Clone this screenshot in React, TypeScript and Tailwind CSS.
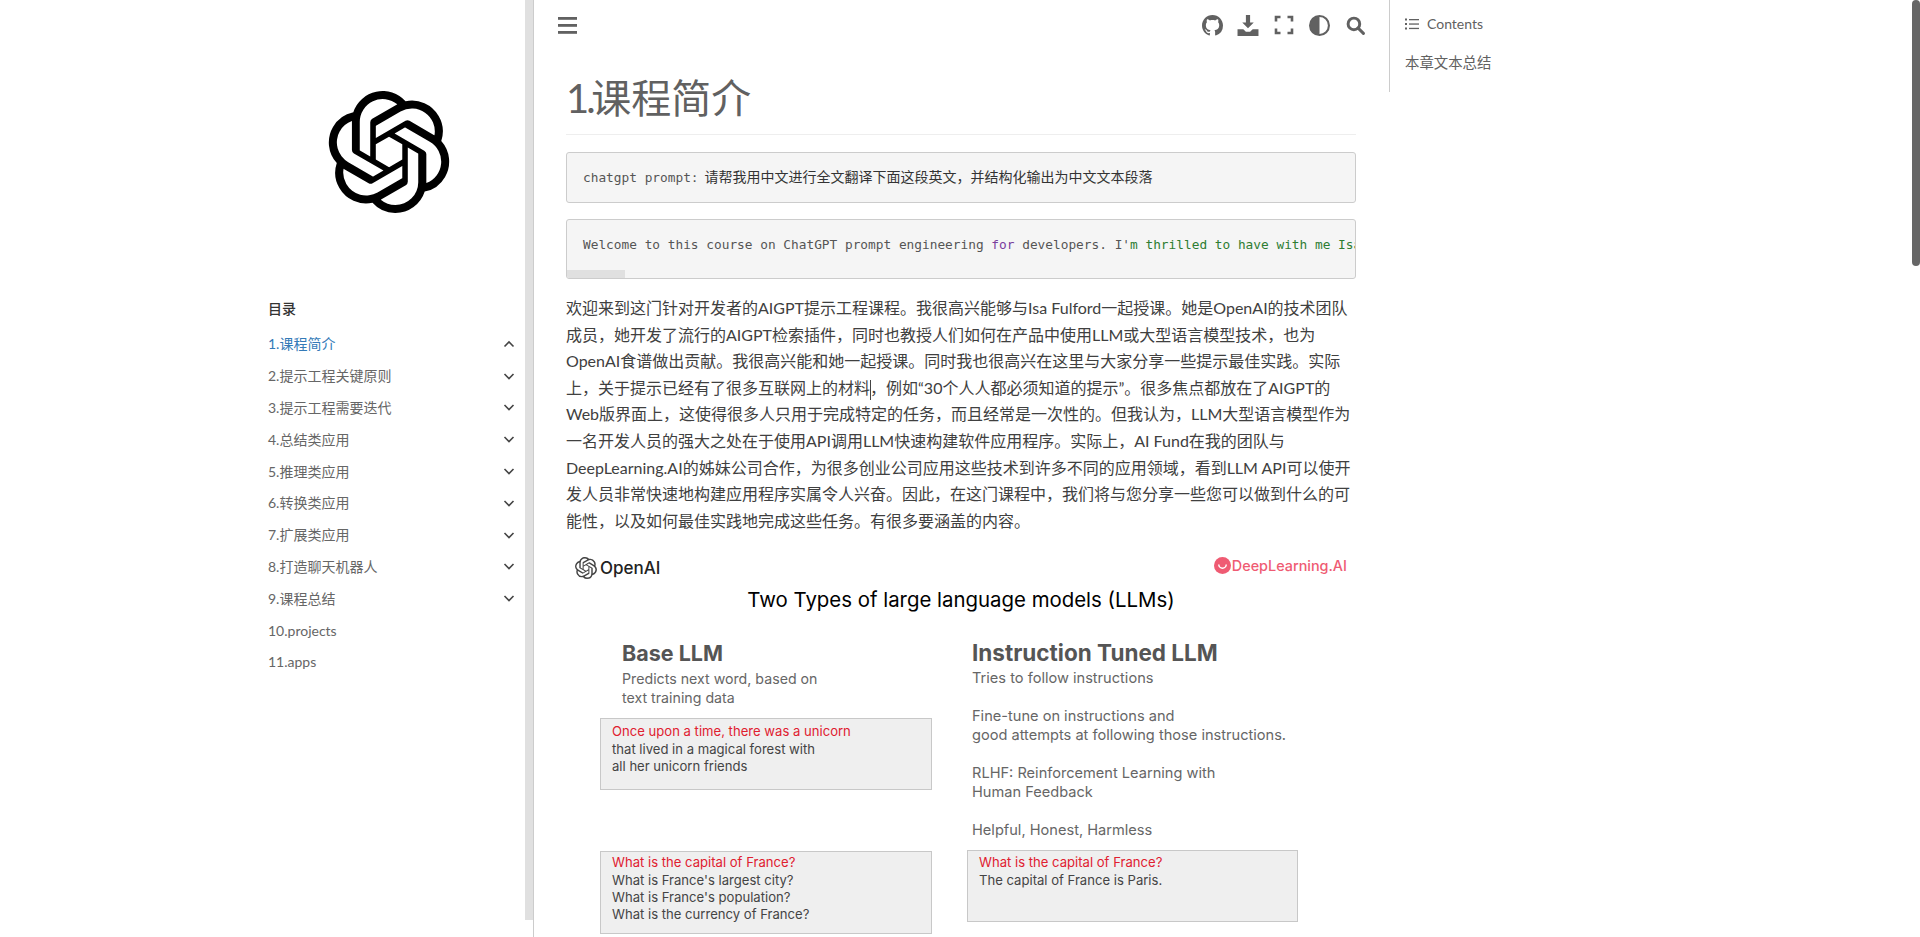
import React from "react";

const font = "font-['Lato','Noto_Sans_CJK_SC',sans-serif]";
const nav = ["2.提示工程关键原则","3.提示工程需要迭代","4.总结类应用","5.推理类应用","6.转换类应用","7.扩展类应用","8.打造聊天机器人","9.课程总结"];
const para = ["欢迎来到这门针对开发者的AIGPT提示工程课程。我很高兴能够与Isa Fulford一起授课。她是OpenAI的技术团队","成员，她开发了流行的AIGPT检索插件，同时也教授人们如何在产品中使用LLM或大型语言模型技术，也为","OpenAI食谱做出贡献。我很高兴能和她一起授课。同时我也很高兴在这里与大家分享一些提示最佳实践。实际","CARET","Web版界面上，这使得很多人只用于完成特定的任务，而且经常是一次性的。但我认为，LLM大型语言模型作为","一名开发人员的强大之处在于使用API调用LLM快速构建软件应用程序。实际上，AI Fund在我的团队与","DeepLearning.AI的姊妹公司合作，为很多创业公司应用这些技术到许多不同的应用领域，看到LLM API可以使开","发人员非常快速地构建应用程序实属令人兴奋。因此，在这门课程中，我们将与您分享一些您可以做到什么的可","能性，以及如何最佳实践地完成这些任务。有很多要涵盖的内容。"];

function Chevron({ up }: { up?: boolean }) {
  return <svg width="14" height="14" viewBox="0 0 14 14" fill="none" stroke="#444" strokeWidth="1.6"><path d={up ? "M2.5 9.500 7 5l4.500 4.500" : "M2.500 5 7 9.500 11.500 5"} /></svg>;
}
function Logo({ size, color = "#000" }: { size: number; color?: string }) {
  return <svg width={size} height={size} viewBox="0 0 24 24" fill={color}><path d="M22.282 9.821a5.985 5.985 0 0 0-.516-4.91 6.046 6.046 0 0 0-6.51-2.9A6.065 6.065 0 0 0 4.981 4.18a5.985 5.985 0 0 0-3.998 2.9 6.046 6.046 0 0 0 .743 7.097 5.98 5.98 0 0 0 .51 4.911 6.051 6.051 0 0 0 6.515 2.9A5.985 5.985 0 0 0 13.26 24a6.056 6.056 0 0 0 5.772-4.206 5.99 5.99 0 0 0 3.997-2.9 6.056 6.056 0 0 0-.747-7.073zM13.26 22.43a4.476 4.476 0 0 1-2.876-1.04l.141-.081 4.779-2.758a.795.795 0 0 0 .392-.681v-6.737l2.02 1.168a.071.071 0 0 1 .038.052v5.583a4.504 4.504 0 0 1-4.494 4.494zM3.6 18.304a4.47 4.47 0 0 1-.535-3.014l.142.085 4.783 2.759a.771.771 0 0 0 .78 0l5.843-3.369v2.332a.08.08 0 0 1-.033.062L9.74 19.95a4.5 4.5 0 0 1-6.14-1.646zM2.34 7.896a4.485 4.485 0 0 1 2.366-1.973V11.6a.766.766 0 0 0 .388.676l5.815 3.355-2.02 1.168a.076.076 0 0 1-.071 0l-4.83-2.786A4.504 4.504 0 0 1 2.34 7.872zm16.597 3.855-5.833-3.387L15.119 7.2a.076.076 0 0 1 .071 0l4.83 2.791a4.494 4.494 0 0 1-.676 8.105v-5.678a.79.79 0 0 0-.407-.667zm2.01-3.023-.141-.085-4.774-2.782a.776.776 0 0 0-.785 0L9.409 9.23V6.897a.066.066 0 0 1 .028-.061l4.83-2.787a4.5 4.5 0 0 1 6.68 4.66zm-12.64 4.135-2.02-1.164a.08.08 0 0 1-.038-.057V6.075a4.5 4.5 0 0 1 7.375-3.453l-.142.08L8.704 5.46a.795.795 0 0 0-.393.681zm1.097-2.365 2.602-1.5 2.607 1.5v2.999l-2.597 1.5-2.607-1.5z" /></svg>;
}

function Box({ cls, red, lines }: { cls: string; red: string; lines: string[] }) {
  return (
    <div className={`${cls} bg-[#efefef] border border-[#c8c8c8] pl-[11px] text-[13.1px] leading-[17.300px] text-[#444] shrink-0`}>
      <div className="text-[#e0202f]">{red}</div>
      {lines.map((l) => <div key={l}>{l}</div>)}
    </div>
  );
}

function Slide() {
  return (
    <div className="font-['Inter',sans-serif] h-[395px] overflow-hidden text-[#666] text-[14.6px] leading-[19px]">
      <div className="flex justify-between items-center pl-[9px] pr-[9px] pt-[15px]">
        <div className="flex items-center gap-[3px] text-[#222] text-[17px] font-medium"><Logo size={22} color="#444" />OpenAI</div>
        <div className="flex items-center gap-[1px] text-[#ef5b73] text-[14.400px] font-medium -mt-[5px]"><svg width="17" height="17" viewBox="0 0 16 16"><circle cx="8" cy="8" r="8" fill="#ef5b73" /><path d="M4.500 7a3.500 3.500 0 0 0 7 0" fill="none" stroke="#fff" strokeWidth="1.400" /></svg>DeepLearning.AI</div>
      </div>
      <div className="text-center text-black text-[20.400px] leading-[26px] mt-[8px]">Two Types of large language models (LLMs)</div>
      <div className="flex mt-[26px]">
        <div className="w-[406px] flex flex-col pl-[56px] shrink-0">
          <div className="text-[21.500px] font-bold text-[#555] leading-[28px]">Base LLM</div>
          <div className="mt-[2px] text-[14.200px]">Predicts next word, based on<br />text training data</div>
          <Box cls="-ml-[22px] mt-[11px] w-[332px] h-[72px] pt-[4px]" red="Once upon a time, there was a unicorn" lines={["that lived in a magical forest with", "all her unicorn friends"]} />
          <Box cls="-ml-[22px] mt-[61px] w-[332px] h-[83px] pt-[2px]" red="What is the capital of France?" lines={["What is France's largest city?", "What is France's population?", "What is the currency of France?"]} />
        </div>
        <div className="flex flex-col">
          <div className="text-[22.500px] font-bold text-[#555] leading-[28px]">Instruction Tuned LLM</div>
          <div className="mt-[2px]">Tries to follow instructions</div>
          <div className="mt-[19px]">Fine-tune on instructions and<br />good attempts at following those instructions.</div>
          <div className="mt-[19px]">RLHF: Reinforcement Learning with<br />Human Feedback</div>
          <div className="mt-[19px]">Helpful, Honest, Harmless</div>
          <Box cls="-ml-[5px] mt-[10px] w-[331px] h-[72px] pt-[3px]" red="What is the capital of France?" lines={["The capital of France is Paris."]} />
        </div>
      </div>
    </div>
  );
}

export default function App() {
  return (
    <div className={`${font} relative flex h-[937px] overflow-hidden bg-white text-[#404040]`}>
      <aside className="w-[534px] shrink-0 flex border-r border-[#ccc] h-full">
        <div className="flex-1 min-w-0 pl-[268px] pr-[7px]">
          <div className="h-[290px] pt-[91px] pl-[60px]"><Logo size={122} /></div>
          <div className="text-[14px] h-[20px] leading-[20px] mt-[9px] font-medium text-[#333]">目录</div>
          <ul className="mt-[9px] text-[14px] text-[#666]">
            <li className="h-[31.800px] flex items-center justify-between pr-[2px] text-[#337ab7]">1.课程简介<Chevron up /></li>
            {nav.map((n) => <li key={n} className="h-[31.800px] flex items-center justify-between pr-[2px]">{n}<Chevron /></li>)}
            <li className="h-[31.800px] flex items-center">10.projects</li>
            <li className="h-[31.800px] flex items-center">11.apps</li>
          </ul>
        </div>
        <div className="w-[8px] shrink-0 h-[920px] bg-[#e0e0e0]" />
      </aside>
      <main className="w-[855px] shrink-0 pl-[32px] pr-[33px]">
        <div className="h-[50px] flex items-center justify-between text-[#616161]">
          <svg width="19" height="17" viewBox="0 0 19 17" fill="#616161" className="-ml-[8px]"><rect y="0" width="19" height="2.800" /><rect y="7" width="19" height="2.800" /><rect y="14" width="19" height="2.800" /></svg>
          <div className="flex items-center -mr-[17px] [&>span]:w-[35.600px] [&>span]:flex [&>span]:justify-center">
            <span><svg width="21" height="21" viewBox="0 0 16 16" fill="#616161"><path d="M8 0C3.580 0 0 3.580 0 8c0 3.540 2.290 6.530 5.470 7.590.4.070.55-.17.55-.38 0-.19-.01-.82-.01-1.490-2.010.37-2.530-.49-2.690-.94-.09-.23-.48-.94-.82-1.130-.28-.15-.68-.52-.01-.53.63-.01 1.080.58 1.230.82.72 1.210 1.870.87 2.330.66.07-.52.28-.87.51-1.070-1.780-.2-3.640-.89-3.640-3.950 0-.87.31-1.590.82-2.150-.08-.2-.36-1.020.08-2.120 0 0 .67-.21 2.200.82.64-.18 1.320-.27 2-.27s1.360.09 2 .27c1.530-1.040 2.200-.82 2.200-.82.44 1.100.16 1.920.08 2.120.51.56.82 1.270.82 2.150 0 3.070-1.870 3.750-3.650 3.950.29.25.54.73.54 1.480 0 1.070-.01 1.930-.01 2.200 0 .21.15.46.55.38A8.010 8.010 0 0 0 16 8c0-4.420-3.580-8-8-8z" /></svg></span>
            <span><svg width="22" height="22" viewBox="0 0 20 21" fill="#616161"><path d="M8 1h4v7h3.500L10 13.500 4.500 8H8z" /><path d="M0 14.500h5.500L8 17h4l2.500-2.500H20V21H0z" /></svg></span>
            <span><svg width="20" height="20" viewBox="0 0 20 20" fill="none" stroke="#616161" strokeWidth="2.600"><path d="M2 6.500V2h4.500M13.500 2H18v4.500M18 13.500V18h-4.500M6.500 18H2v-4.500" /></svg></span>
            <span><svg width="21" height="21" viewBox="0 0 20 20"><circle cx="10" cy="10" r="9" fill="#fff" stroke="#616161" strokeWidth="2" /><path d="M10 1a9 9 0 0 0 0 18z" fill="#616161" /></svg></span>
            <span><svg width="19" height="19" viewBox="0 0 18 18" fill="none" stroke="#616161" strokeWidth="2.800"><circle cx="7.500" cy="7.500" r="5.500" /><path d="M11.500 11.500 16.500 16.500" strokeLinecap="round" /></svg></span>
          </div>
        </div>
        <h1 className="text-[40px] leading-[54px] mt-[21px] text-[#616161] font-normal border-b border-[#eee] h-[64px]"><span className="tracking-[-3px] -mr-[1.500px]">1.</span>课程简介</h1>
        <pre className="mt-[17px] h-[51px] flex items-center px-[16px] bg-[#f5f5f5] border border-[#ccc] rounded-[3px] text-[13px] text-[#333] font-['DejaVu_Sans_Mono','Noto_Sans_CJK_SC',monospace]">
          <code className="font-['DejaVu_Sans_Mono','Noto_Sans_CJK_SC',monospace] text-[12.800px]"><span className="text-[#555]">chatgpt prompt:</span><span className="text-[14px] text-[#333] ml-[6px]">请帮我用中文进行全文翻译下面这段英文，并结构化输出为中文文本段落</span></code>
        </pre>
        <pre className="relative mt-[16px] h-[60px] pt-[16px] pl-[16px] bg-[#f5f5f5] border border-[#ccc] rounded-[3px] overflow-hidden text-[12.800px] leading-[18px] text-[#555] font-['DejaVu_Sans_Mono',monospace]">
          Welcome to this course on ChatGPT prompt engineering <span className="text-[#7a3e9d]">for</span> developers. I'<span className="text-[#2e7d32]">m thrilled to have with me Isa Fulford to teach this course.</span>
          <span className="absolute left-0 bottom-0 h-[8px] w-[58px] bg-[#e0e0e0]" />
        </pre>
        <div className="mt-[16px] text-[16px] leading-[26.600px] text-[#404040]">
          {para.map((l) => l === "CARET"
            ? <div key={l} className="whitespace-nowrap">上，关于提示已经有了很多互联网上的材料<span className="inline-block w-px h-[20px] -mr-px bg-[#444] align-middle" />，例如“30个人人都必须知道的提示”。很多焦点都放在了AIGPT的</div>
            : <div key={l} className="whitespace-nowrap">{l}</div>)}
        </div>
        <div className="mt-[8px]"><Slide /></div>
      </main>
      <nav className="flex-1 text-[14.400px] text-[#616161]">
        <div className="w-[300px] h-[92px] border-l border-[#ccc] pl-[15px]">
          <div className="h-[47px] flex items-center gap-[8px] text-[14px]">
            <svg width="14" height="12" viewBox="0 0 14 12" fill="#616161"><rect x="0" y="0.500" width="2" height="2" /><rect x="0" y="5" width="2" height="2" /><rect x="0" y="9.500" width="2" height="2" /><rect x="4" y="1" width="10" height="1.300" /><rect x="4" y="5.400" width="10" height="1.300" /><rect x="4" y="9.800" width="10" height="1.300" /></svg>
            Contents
          </div>
          <div className="mt-[6px] leading-[20px]">本章文本总结</div>
        </div>
      </nav>
      <div className="absolute right-0 top-0 w-[8px] h-[266px] rounded-full bg-[#666]" />
    </div>
  );
}
